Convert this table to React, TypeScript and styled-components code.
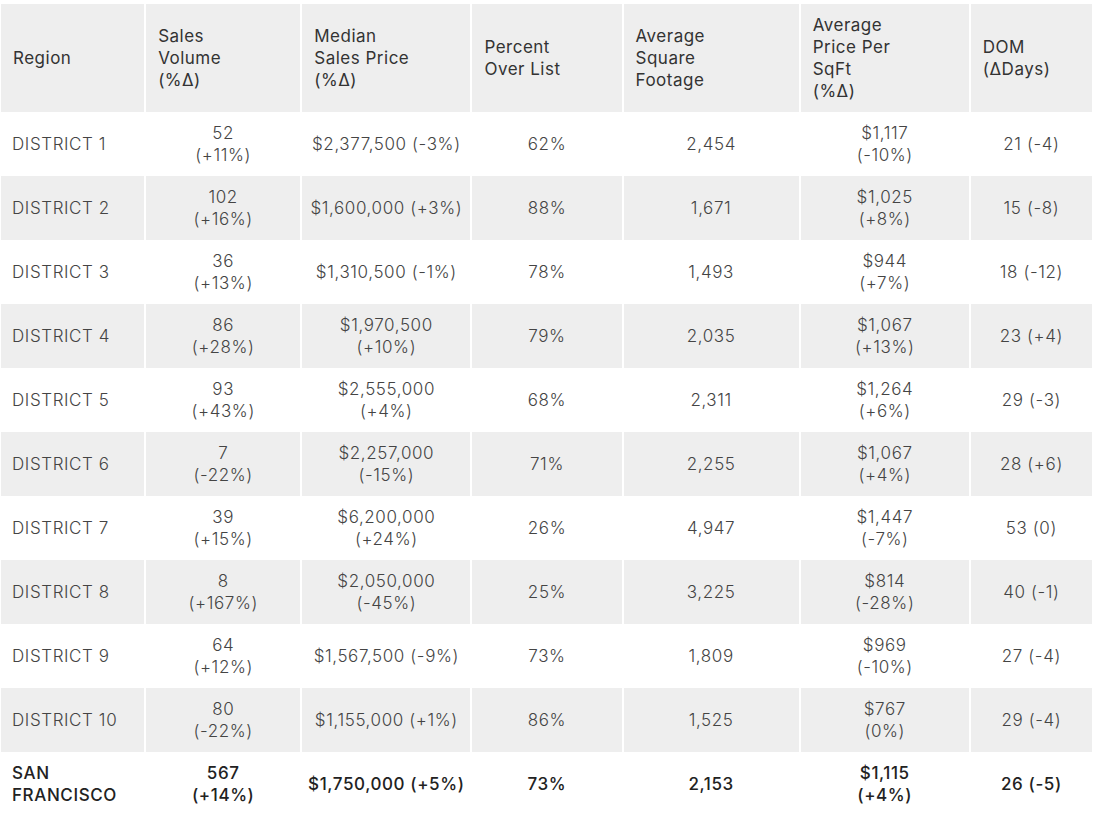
import React from "react";
import styled, { createGlobalStyle } from "styled-components";

const Global = createGlobalStyle`
  html, body { margin: 0; padding: 0; background: #ffffff; }
  body { font-family: "Inter", "Open Sans", "DejaVu Sans", sans-serif; color: #333; }
`;

const Table = styled.table`
  border-collapse: separate;
  border-spacing: 2px 0;
  margin: 4px 0 0 -1px;
  table-layout: fixed;
  width: 1095px;
`;

const HeadCell = styled.th`
  background: #eeeeee;
  height: 108px;
  padding: 0 6px 0 12px;
  text-align: left;
  vertical-align: middle;
  font-weight: 400;
  font-size: 17px;
  line-height: 22px;
  letter-spacing: 0.5px;
  color: #333333;
`;

const Row = styled.tr<{ $shade: boolean }>`
  & > td { background: ${(p) => (p.$shade ? "#eeeeee" : "#ffffff")}; }
`;

const Cell = styled.td<{ $left?: boolean; $total?: boolean }>`
  height: 64px;
  padding: 0 ${(p) => (p.$left ? "4px 0 11px" : "4px")};
  text-align: ${(p) => (p.$left ? "left" : "center")};
  vertical-align: middle;
  font-size: 17px;
  line-height: 22px;
  letter-spacing: 0.6px;
  font-weight: ${(p) => (p.$total ? 500 : 300)};
  color: ${(p) => (p.$total ? "#222222" : "#444444")};
`;

const Line = styled.span`
  display: block;
  white-space: nowrap;
`;

const cols = [
  { label: ["Region"], w: 143 },
  { label: ["Sales", "Volume", "(%Δ)"], w: 154 },
  { label: ["Median", "Sales Price", "(%Δ)"], w: 168 },
  { label: ["Percent", "Over List"], w: 149 },
  { label: ["Average", "Square", "Footage"], w: 175 },
  { label: ["Average", "Price Per", "SqFt", "(%Δ)"], w: 168 },
  { label: ["DOM", "(ΔDays)"], w: 121 },
];

const rows: string[][] = [
  ["DISTRICT 1", "52\n(+11%)", "$2,377,500 (-3%)", "62%", "2,454", "$1,117\n(-10%)", "21 (-4)"],
  ["DISTRICT 2", "102\n(+16%)", "$1,600,000 (+3%)", "88%", "1,671", "$1,025\n(+8%)", "15 (-8)"],
  ["DISTRICT 3", "36\n(+13%)", "$1,310,500 (-1%)", "78%", "1,493", "$944\n(+7%)", "18 (-12)"],
  ["DISTRICT 4", "86\n(+28%)", "$1,970,500\n(+10%)", "79%", "2,035", "$1,067\n(+13%)", "23 (+4)"],
  ["DISTRICT 5", "93\n(+43%)", "$2,555,000\n(+4%)", "68%", "2,311", "$1,264\n(+6%)", "29 (-3)"],
  ["DISTRICT 6", "7\n(-22%)", "$2,257,000\n(-15%)", "71%", "2,255", "$1,067\n(+4%)", "28 (+6)"],
  ["DISTRICT 7", "39\n(+15%)", "$6,200,000\n(+24%)", "26%", "4,947", "$1,447\n(-7%)", "53 (0)"],
  ["DISTRICT 8", "8\n(+167%)", "$2,050,000\n(-45%)", "25%", "3,225", "$814\n(-28%)", "40 (-1)"],
  ["DISTRICT 9", "64\n(+12%)", "$1,567,500 (-9%)", "73%", "1,809", "$969\n(-10%)", "27 (-4)"],
  ["DISTRICT 10", "80\n(-22%)", "$1,155,000 (+1%)", "86%", "1,525", "$767\n(0%)", "29 (-4)"],
  ["SAN\nFRANCISCO", "567\n(+14%)", "$1,750,000 (+5%)", "73%", "2,153", "$1,115\n(+4%)", "26 (-5)"],
];

const Lines = ({ text }: { text: string }) => (
  <>
    {text.split("\n").map((t, i) => (
      <Line key={i}>{t}</Line>
    ))}
  </>
);

export default function App() {
  return (
    <>
      <Global />
      <Table>
        <colgroup>
          {cols.map((c, i) => (
            <col key={i} style={{ width: c.w }} />
          ))}
        </colgroup>
        <thead>
          <tr>
            {cols.map((c, i) => (
              <HeadCell key={i}>
                {c.label.map((l, j) => (
                  <Line key={j}>{l}</Line>
                ))}
              </HeadCell>
            ))}
          </tr>
        </thead>
        <tbody>
          {rows.map((r, i) => {
            const total = i === rows.length - 1;
            return (
              <Row key={i} $shade={i % 2 === 1}>
                {r.map((v, j) => (
                  <Cell key={j} $left={j === 0} $total={total}>
                    <Lines text={v} />
                  </Cell>
                ))}
              </Row>
            );
          })}
        </tbody>
      </Table>
    </>
  );
}
